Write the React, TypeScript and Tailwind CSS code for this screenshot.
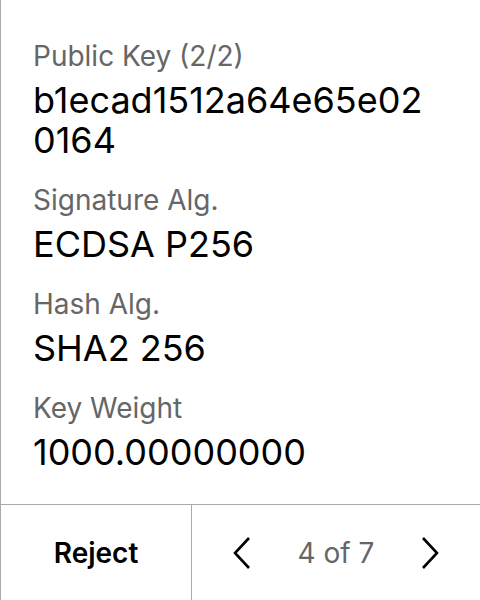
const rows = [
  { label: "Public Key (2/2)", value: "b1ecad1512a64e65e020164" },
  { label: "Signature Alg.", value: "ECDSA P256" },
  { label: "Hash Alg.", value: "SHA2 256" },
  { label: "Key Weight", value: "1000.00000000" },
];

const Chevron = ({ dir }: { dir: "left" | "right" }) => (
  <svg width="18" height="32" viewBox="0 0 18 32" fill="none">
    <path
      d={dir === "left" ? "M16 1 L2 16 L16 31" : "M2 1 L16 16 L2 31"}
      stroke="#000"
      strokeWidth="2.6"
    />
  </svg>
);

export default function App() {
  return (
    <div
      className="w-[480px] h-[600px] flex flex-col border-l border-[#aaaaaa] bg-white text-black"
      style={{ fontFamily: "Inter, 'Noto Sans', sans-serif" }}
    >
      <div className="flex-1 pt-10 pl-8 pr-10 flex flex-col gap-6">
        {rows.map((r) => (
          <div key={r.label} className="flex flex-col gap-2">
            <div className="text-[28px] leading-[32px] text-[#666666]">{r.label}</div>
            <div className="text-[36px] leading-[40px] break-all">{r.value}</div>
          </div>
        ))}
      </div>
      <div className="h-[96px] flex border-t border-[#aaaaaa]">
        <button className="w-[191px] flex items-center justify-center text-[28px] font-semibold border-r border-[#aaaaaa]">
          Reject
        </button>
        <div className="flex-1 flex items-center justify-between px-[41px]">
          <Chevron dir="left" />
          <span className="text-[28px] text-[#666666]">4 of 7</span>
          <Chevron dir="right" />
        </div>
      </div>
    </div>
  );
}
